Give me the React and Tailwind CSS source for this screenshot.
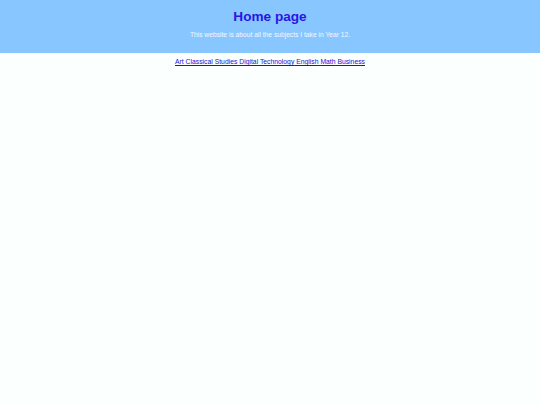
export default function App() {
  return (
    <div className="min-h-[405px] bg-[#fbfffe]" style={{ fontFamily: '"Liberation Sans", Arial, sans-serif' }}>
      <header className="bg-[#87c6ff] h-[53px] flex flex-col items-center pt-[9px]">
        <h1 className="text-[13.6px] font-bold text-[#2b14e6] leading-[16px]">Home page</h1>
        <p className="text-[6.7px] text-[#f4f8ff] mt-[5px] leading-[9px]">This website is about all the subjects I take in Year 12.</p>
      </header>
      <nav className="flex justify-center pt-[4px] text-[6.8px] leading-[10px]">
        <div className="text-[#1a10d8] underline">
          <a href="#">Art</a> <a href="#">Classical Studies</a> <a href="#">Digital Technology</a> <a href="#">English</a> <a href="#">Math</a> <a href="#">Business</a>
        </div>
      </nav>
    </div>
  );
}
